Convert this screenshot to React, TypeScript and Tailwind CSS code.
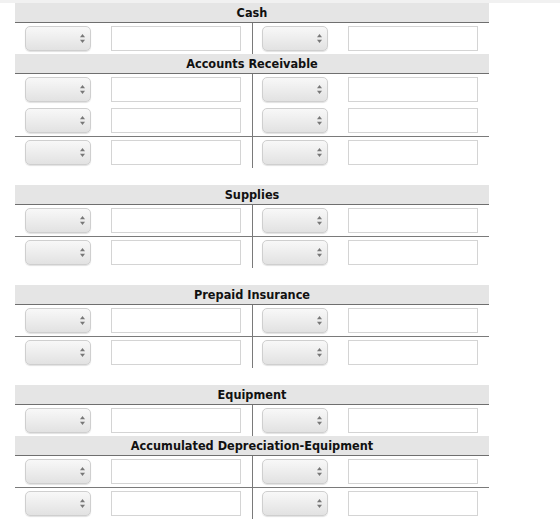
import { Fragment } from 'react'

type Account = {
	title: string
	rows: number
	total?: boolean
	gap?: boolean
}

const accounts: Account[] = [
	{ title: 'Cash', rows: 1 },
	{ title: 'Accounts Receivable', rows: 2, total: true, gap: true },
	{ title: 'Supplies', rows: 1, total: true, gap: true },
	{ title: 'Prepaid Insurance', rows: 1, total: true, gap: true },
	{ title: 'Equipment', rows: 1 },
	{ title: 'Accumulated Depreciation-Equipment', rows: 1, total: true },
]

const SelectBox = () => (
	<div className="relative w-[66px] h-[25px]">
		<select className="appearance-none w-full h-full rounded-[5px] border border-[#cfcfcf] bg-gradient-to-b from-[#f8f8f8] to-[#e2e2e2] shadow-[0_1px_1px_rgba(0,0,0,0.12)] outline-none" />
		{/* up / down arrows */}
		<svg className="absolute right-[6px] top-[8px] pointer-events-none" width="5" height="9" viewBox="0 0 5 9">
			<path d="M2.5 0 L5 3.2 L0 3.2 Z" fill="#777" />
			<path d="M2.5 9 L5 5.8 L0 5.8 Z" fill="#777" />
		</svg>
	</div>
)

const AmountInput = () => (
	<input type="text" className="w-[130px] h-[25px] border border-[#d4d4d4] bg-white outline-none" />
)

const Side = ({ left }: { left?: boolean }) => (
	<div className={`flex items-center gap-[20px] h-[31px] ${left ? 'pl-[10px]' : 'pl-[9px]'}`}>
		<SelectBox />
		<AmountInput />
	</div>
)

const Row = ({ line }: { line?: boolean }) => (
	<div className={`grid grid-cols-[237px_1px_236px] ${line ? 'border-t border-[#7a7a7a]' : ''}`}>
		<Side left />
		<div className="bg-[#7a7a7a]" />
		<Side />
	</div>
)

const TAccount = ({ account }: { account: Account }) => (
	<div className={account.gap ? 'mb-[17px]' : ''}>
		<div
			className="h-[20px] bg-[#e5e5e5] border-b border-[#6f6f6f] text-center text-[12.6px] font-bold leading-[20px] text-[#111]"
			style={{ fontFamily: '"DejaVu Sans Condensed", "DejaVu Sans", sans-serif' }}
		>
			{account.title}
		</div>
		{Array.from({ length: account.rows }).map((_, i) => (
			<Row key={i} />
		))}
		{account.total && <Row line />}
	</div>
)

export default function App() {
	return (
		<div className="w-[560px] h-[522px] bg-white overflow-hidden">
			<div className="h-[3px] bg-[#f1f1f1]" />
			<div className="ml-[15px] w-[474px]">
				{accounts.map((a) => (
					<Fragment key={a.title}>
						<TAccount account={a} />
					</Fragment>
				))}
			</div>
		</div>
	)
}
